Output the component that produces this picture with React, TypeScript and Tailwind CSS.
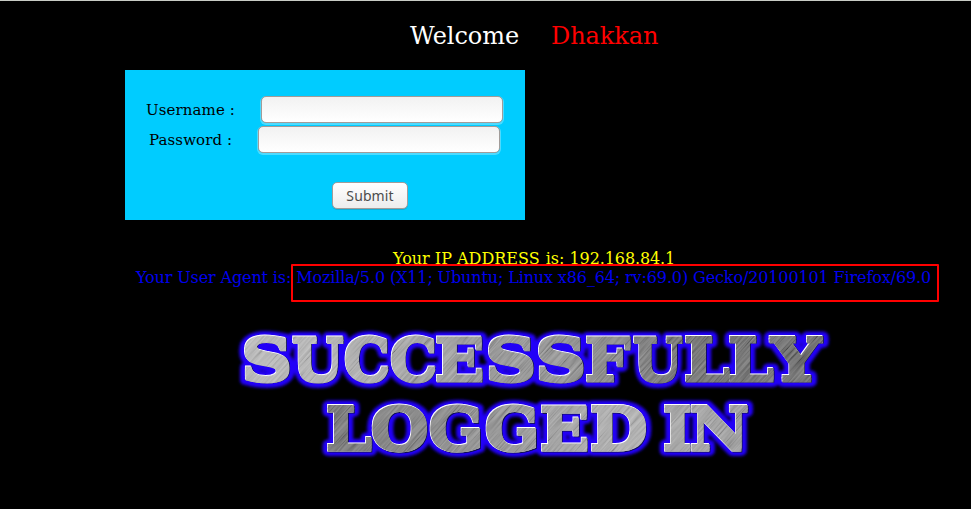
import React from "react";

type Glyph = [char: string, left: number, right: number];

const lineOne: Glyph[] = [
  ["S", 244, 290], ["U", 292, 344], ["C", 345, 389], ["C", 391, 436],
  ["E", 436, 483], ["S", 488, 534], ["S", 538, 584], ["F", 586, 631],
  ["U", 633, 683], ["L", 685, 730], ["L", 729, 774], ["Y", 769, 823],
];
const lineTwo: Glyph[] = [
  ["L", 327, 372], ["O", 372, 428], ["G", 430, 480], ["G", 486, 536],
  ["E", 541, 588], ["D", 591, 646], ["I", 664, 691], ["N", 691, 748],
];

const SIZE = 58;
const ctx = document.createElement("canvas").getContext("2d")!;

// Stretches one letter so that its outlined shape spans left..right.
function Letter({ glyph, baseline }: { glyph: Glyph; baseline: number }) {
  const [char, left, right] = glyph;
  ctx.font = `bold ${SIZE}px "DejaVu Serif"`;
  const m = ctx.measureText(char);
  const ink = m.actualBoundingBoxLeft + m.actualBoundingBoxRight;
  const sx = (right - left - 1) / ink;
  return (
    <text
      transform={`translate(${left + 0.5 + m.actualBoundingBoxLeft * sx} ${baseline}) scale(${sx} 1)`}
      fontSize={SIZE}
      className="font-['DejaVu_Serif',serif] font-bold"
    >
      {char}
    </text>
  );
}

function Banner() {
  return (
    <svg viewBox="225 315 620 155" className="ml-[225px] block h-[155px] w-[620px]" role="img" aria-label="Successfully logged in">
      <defs>
        <g id="line">
          {lineOne.map((g, i) => <Letter key={i} glyph={g} baseline={380} />)}
          {lineTwo.map((g, i) => <Letter key={i} glyph={g} baseline={449.5} />)}
        </g>
        {/* Stacked copies thicken the horizontal strokes into slabs. */}
        <g id="letters">
          <use href="#line" y="-1.5" />
          <use href="#line" y="1.7" />
        </g>
        <linearGradient id="steel" gradientUnits="userSpaceOnUse" x1="244" y1="360" x2="823" y2="360">
          <stop offset="0" stopColor="#b0b0b0" />
          <stop offset="0.2" stopColor="#a4a4a4" />
          <stop offset="0.4" stopColor="#8c8c8c" />
          <stop offset="0.55" stopColor="#888888" />
          <stop offset="0.75" stopColor="#686868" />
          <stop offset="1" stopColor="#646464" />
        </linearGradient>
        <linearGradient id="steelLow" gradientUnits="userSpaceOnUse" x1="327" y1="430" x2="748" y2="430">
          <stop offset="0" stopColor="#6c6c6c" />
          <stop offset="0.35" stopColor="#828282" />
          <stop offset="0.7" stopColor="#a6a6a6" />
          <stop offset="1" stopColor="#909090" />
        </linearGradient>
        <filter id="glow" x="-5%" y="-15%" width="110%" height="130%">
          <feGaussianBlur stdDeviation="1.8" />
        </filter>
        <filter id="brushed" x="0" y="0" width="100%" height="100%">
          <feTurbulence type="fractalNoise" baseFrequency="0.025 0.7" numOctaves="2" seed="4" />
          <feColorMatrix values="1.6 0 0 0 -0.3  1.6 0 0 0 -0.3  1.6 0 0 0 -0.3  0 0 0 0 1" />
        </filter>
        <mask id="face" maskUnits="userSpaceOnUse" x="225" y="315" width="620" height="155">
          <use href="#letters" fill="white" stroke="white" strokeWidth="1" />
        </mask>
      </defs>
      <g filter="url(#glow)">
        <use href="#letters" fill="#2000f8" stroke="#2000f8" strokeWidth="10" strokeLinejoin="round" />
      </g>
      <use href="#letters" fill="#101050" stroke="#101050" strokeWidth="1" transform="translate(0.7 0.7)" />
      <use href="#letters" fill="white" stroke="white" strokeWidth="1" transform="translate(-0.7 -0.7)" />
      <g mask="url(#face)">
        <rect x="225" y="315" width="620" height="78" fill="url(#steel)" />
        <rect x="225" y="393" width="620" height="77" fill="url(#steelLow)" />
        <g className="opacity-70 mix-blend-soft-light">
          <rect x="100" y="-50" width="900" height="900" filter="url(#brushed)" transform="rotate(-48 535 392)" />
        </g>
      </g>
    </svg>
  );
}

const field =
  "h-[27px] w-[242px] rounded-[5px] border border-[#a29c99] bg-linear-to-b from-[#f2f2f2] to-white shadow-[0_1px_0_1px_rgba(255,255,255,0.3)] outline-none";

export default function App() {
  return (
    <main className="relative h-[509px] w-[971px] overflow-hidden border-t border-[#c8cbc5] bg-black font-['DejaVu_Serif',serif] text-base leading-[19px]">
      <h1 className="ml-[410px] mt-[21px] flex h-[29px] gap-8 whitespace-nowrap text-2xl leading-[29px] tracking-[-0.06px] text-white">
        <span>Welcome</span>
        <span className="text-[#ff0000]">Dhakkan</span>
      </h1>
      <form className="ml-[125px] mt-[19px] h-[150px] w-[400px] bg-[#00ccff] pt-[26px] text-[15px] tracking-[0.1px] text-black" onSubmit={(e) => e.preventDefault()}>
        <label className="flex h-[30px] pl-[21px]">
          <span className="w-[115px] pt-[5px]">Username :</span>
          <input className={field} type="text" />
        </label>
        <label className="flex h-[30px] pl-6">
          <span className="w-[109px] pt-[5px]">Password :</span>
          <input className={field} type="password" />
        </label>
        <button className="ml-[207px] mt-[26px] block h-[27px] w-[76px] rounded-[5px] border border-[#a29c99] bg-linear-to-b from-white to-[#ededed] font-['Noto_Sans',sans-serif] text-sm leading-[25px] text-[#4c4c4c] shadow-[0_1px_0_rgba(80,80,80,0.25)]">
          Submit
        </button>
      </form>
      <p className="ml-[393px] mt-[29px] whitespace-nowrap text-[#ffff00]">
        Your IP ADDRESS <span className="ml-px">is:</span> <span className="tracking-[-0.1px]">192.168.84.1</span>
      </p>
      <p className="ml-[136px] whitespace-nowrap tracking-[-0.125px] text-[#0000ee]">
        Your User Agent is: Mozilla/5.0 (X11; Ubuntu; Linux x86_64; rv:69.0) Gecko/20100101 Firefox/69.0
      </p>
      <div className="absolute left-[291px] top-[263px] h-[38px] w-[648px] rounded-[1px] border-2 border-[#ff0000]" />
      <div className="mt-[28px]">
        <Banner />
      </div>
    </main>
  );
}
